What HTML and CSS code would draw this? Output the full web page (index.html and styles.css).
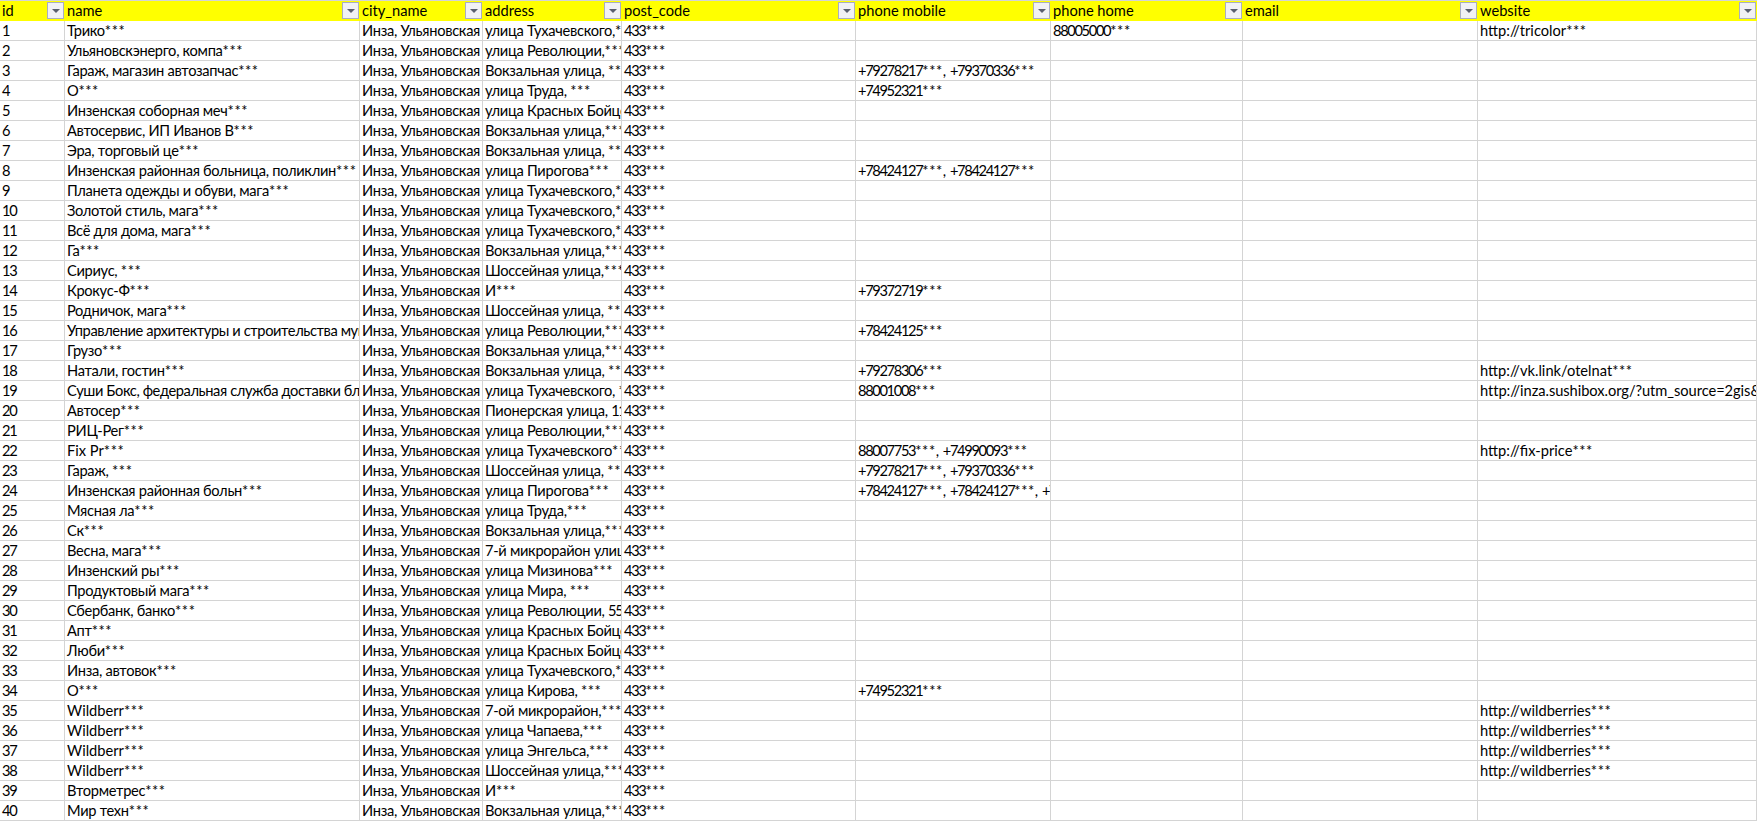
FILE: index.html
```html
<!DOCTYPE html>
<html lang="ru">
<head>
<meta charset="utf-8">
<title>Sheet</title>
<link rel="stylesheet" href="styles.css">
</head>
<body>
<table class="sheet">
<colgroup><col class="c-id"><col class="c-name"><col class="c-city"><col class="c-addr"><col class="c-post"><col class="c-mob"><col class="c-home"><col class="c-mail"><col class="c-web"></colgroup>
<thead><tr>
<th><div class="head"><span class="label">id</span><span class="filter"></span></div></th>
<th><div class="head"><span class="label">name</span><span class="filter"></span></div></th>
<th><div class="head"><span class="label">city_name</span><span class="filter"></span></div></th>
<th><div class="head"><span class="label">address</span><span class="filter"></span></div></th>
<th><div class="head"><span class="label">post_code</span><span class="filter"></span></div></th>
<th><div class="head"><span class="label">phone mobile</span><span class="filter"></span></div></th>
<th><div class="head"><span class="label">phone home</span><span class="filter"></span></div></th>
<th><div class="head"><span class="label">email</span><span class="filter"></span></div></th>
<th><div class="head"><span class="label">website</span><span class="filter"></span></div></th>
</tr></thead>
<tbody>
<tr><td class="num">1</td><td>Трико<span class="m">***</span></td><td>Инза, Ульяновская</td><td>улица Тухачевского,<span class="m">***</span></td><td class="num">433<span class="m">***</span></td><td></td><td class="num">88005000<span class="m">***</span></td><td></td><td class="lat">http://tricolor<span class="m">***</span></td></tr>
<tr><td class="num">2</td><td>Ульяновскэнерго, компа<span class="m">***</span></td><td>Инза, Ульяновская</td><td>улица Революции,<span class="m">***</span></td><td class="num">433<span class="m">***</span></td><td></td><td></td><td></td><td></td></tr>
<tr><td class="num">3</td><td>Гараж, магазин автозапчас<span class="m">***</span></td><td>Инза, Ульяновская</td><td>Вокзальная улица, <span class="m">***</span></td><td class="num">433<span class="m">***</span></td><td class="num">+79278217<span class="m">***</span><span class="sep">, </span>+79370336<span class="m">***</span></td><td></td><td></td><td></td></tr>
<tr><td class="num">4</td><td>О<span class="m">***</span></td><td>Инза, Ульяновская</td><td>улица Труда, <span class="m">***</span></td><td class="num">433<span class="m">***</span></td><td class="num">+74952321<span class="m">***</span></td><td></td><td></td><td></td></tr>
<tr><td class="num">5</td><td>Инзенская соборная меч<span class="m">***</span></td><td>Инза, Ульяновская</td><td>улица Красных Бойцов<span class="m">***</span></td><td class="num">433<span class="m">***</span></td><td></td><td></td><td></td><td></td></tr>
<tr><td class="num">6</td><td>Автосервис, ИП Иванов В<span class="m">***</span></td><td>Инза, Ульяновская</td><td>Вокзальная улица,<span class="m">***</span></td><td class="num">433<span class="m">***</span></td><td></td><td></td><td></td><td></td></tr>
<tr><td class="num">7</td><td>Эра, торговый це<span class="m">***</span></td><td>Инза, Ульяновская</td><td>Вокзальная улица, <span class="m">***</span></td><td class="num">433<span class="m">***</span></td><td></td><td></td><td></td><td></td></tr>
<tr><td class="num">8</td><td>Инзенская районная больница, поликлин<span class="m">***</span></td><td>Инза, Ульяновская</td><td>улица Пирогова<span class="m">***</span></td><td class="num">433<span class="m">***</span></td><td class="num">+78424127<span class="m">***</span><span class="sep">, </span>+78424127<span class="m">***</span></td><td></td><td></td><td></td></tr>
<tr><td class="num">9</td><td>Планета одежды и обуви, мага<span class="m">***</span></td><td>Инза, Ульяновская</td><td>улица Тухачевского,<span class="m">***</span></td><td class="num">433<span class="m">***</span></td><td></td><td></td><td></td><td></td></tr>
<tr><td class="num">10</td><td>Золотой стиль, мага<span class="m">***</span></td><td>Инза, Ульяновская</td><td>улица Тухачевского,<span class="m">***</span></td><td class="num">433<span class="m">***</span></td><td></td><td></td><td></td><td></td></tr>
<tr><td class="num">11</td><td>Всё для дома, мага<span class="m">***</span></td><td>Инза, Ульяновская</td><td>улица Тухачевского,<span class="m">***</span></td><td class="num">433<span class="m">***</span></td><td></td><td></td><td></td><td></td></tr>
<tr><td class="num">12</td><td>Га<span class="m">***</span></td><td>Инза, Ульяновская</td><td>Вокзальная улица,<span class="m">***</span></td><td class="num">433<span class="m">***</span></td><td></td><td></td><td></td><td></td></tr>
<tr><td class="num">13</td><td>Сириус, <span class="m">***</span></td><td>Инза, Ульяновская</td><td>Шоссейная улица,<span class="m">***</span></td><td class="num">433<span class="m">***</span></td><td></td><td></td><td></td><td></td></tr>
<tr><td class="num">14</td><td>Крокус-Ф<span class="m">***</span></td><td>Инза, Ульяновская</td><td>И<span class="m">***</span></td><td class="num">433<span class="m">***</span></td><td class="num">+79372719<span class="m">***</span></td><td></td><td></td><td></td></tr>
<tr><td class="num">15</td><td>Родничок, мага<span class="m">***</span></td><td>Инза, Ульяновская</td><td>Шоссейная улица, <span class="m">***</span></td><td class="num">433<span class="m">***</span></td><td></td><td></td><td></td><td></td></tr>
<tr><td class="num">16</td><td class="tight">Управление архитектуры и строительства муниципального<span class="m">***</span></td><td>Инза, Ульяновская</td><td>улица Революции,<span class="m">***</span></td><td class="num">433<span class="m">***</span></td><td class="num">+78424125<span class="m">***</span></td><td></td><td></td><td></td></tr>
<tr><td class="num">17</td><td>Грузо<span class="m">***</span></td><td>Инза, Ульяновская</td><td>Вокзальная улица,<span class="m">***</span></td><td class="num">433<span class="m">***</span></td><td></td><td></td><td></td><td></td></tr>
<tr><td class="num">18</td><td>Натали, гостин<span class="m">***</span></td><td>Инза, Ульяновская</td><td>Вокзальная улица, <span class="m">***</span></td><td class="num">433<span class="m">***</span></td><td class="num">+79278306<span class="m">***</span></td><td></td><td></td><td class="lat">http://vk.link/otelnat<span class="m">***</span></td></tr>
<tr><td class="num">19</td><td class="tight">Суши Бокс, федеральная служба доставки блюд<span class="m">***</span></td><td>Инза, Ульяновская</td><td>улица Тухачевского, <span class="m">***</span></td><td class="num">433<span class="m">***</span></td><td class="num">88001008<span class="m">***</span></td><td></td><td></td><td class="lat tight-url">http://inza.sushibox.org/?utm_source=2gis&amp;<span class="m">***</span></td></tr>
<tr><td class="num">20</td><td>Автосер<span class="m">***</span></td><td>Инза, Ульяновская</td><td>Пионерская улица, <span class="d">11</span><span class="m">***</span></td><td class="num">433<span class="m">***</span></td><td></td><td></td><td></td><td></td></tr>
<tr><td class="num">21</td><td>РИЦ-Рег<span class="m">***</span></td><td>Инза, Ульяновская</td><td>улица Революции,<span class="m">***</span></td><td class="num">433<span class="m">***</span></td><td></td><td></td><td></td><td></td></tr>
<tr><td class="num">22</td><td class="lat">Fix Pr<span class="m">***</span></td><td>Инза, Ульяновская</td><td>улица Тухачевского<span class="m">***</span></td><td class="num">433<span class="m">***</span></td><td class="num">88007753<span class="m">***</span><span class="sep">, </span>+74990093<span class="m">***</span></td><td></td><td></td><td class="lat">http://fix-price<span class="m">***</span></td></tr>
<tr><td class="num">23</td><td>Гараж, <span class="m">***</span></td><td>Инза, Ульяновская</td><td>Шоссейная улица, <span class="m">***</span></td><td class="num">433<span class="m">***</span></td><td class="num">+79278217<span class="m">***</span><span class="sep">, </span>+79370336<span class="m">***</span></td><td></td><td></td><td></td></tr>
<tr><td class="num">24</td><td>Инзенская районная больн<span class="m">***</span></td><td>Инза, Ульяновская</td><td>улица Пирогова<span class="m">***</span></td><td class="num">433<span class="m">***</span></td><td class="num">+78424127<span class="m">***</span><span class="sep">, </span>+78424127<span class="m">***</span><span class="sep">, </span>+78424127<span class="m">***</span></td><td></td><td></td><td></td></tr>
<tr><td class="num">25</td><td>Мясная ла<span class="m">***</span></td><td>Инза, Ульяновская</td><td>улица Труда,<span class="m">***</span></td><td class="num">433<span class="m">***</span></td><td></td><td></td><td></td><td></td></tr>
<tr><td class="num">26</td><td>Ск<span class="m">***</span></td><td>Инза, Ульяновская</td><td>Вокзальная улица,<span class="m">***</span></td><td class="num">433<span class="m">***</span></td><td></td><td></td><td></td><td></td></tr>
<tr><td class="num">27</td><td>Весна, мага<span class="m">***</span></td><td>Инза, Ульяновская</td><td>7-й микрорайон улица<span class="m">***</span></td><td class="num">433<span class="m">***</span></td><td></td><td></td><td></td><td></td></tr>
<tr><td class="num">28</td><td>Инзенский ры<span class="m">***</span></td><td>Инза, Ульяновская</td><td>улица Мизинова<span class="m">***</span></td><td class="num">433<span class="m">***</span></td><td></td><td></td><td></td><td></td></tr>
<tr><td class="num">29</td><td>Продуктовый мага<span class="m">***</span></td><td>Инза, Ульяновская</td><td>улица Мира, <span class="m">***</span></td><td class="num">433<span class="m">***</span></td><td></td><td></td><td></td><td></td></tr>
<tr><td class="num">30</td><td>Сбербанк, банко<span class="m">***</span></td><td>Инза, Ульяновская</td><td>улица Революции, <span class="d">55</span><span class="m">***</span></td><td class="num">433<span class="m">***</span></td><td></td><td></td><td></td><td></td></tr>
<tr><td class="num">31</td><td>Апт<span class="m">***</span></td><td>Инза, Ульяновская</td><td>улица Красных Бойцов<span class="m">***</span></td><td class="num">433<span class="m">***</span></td><td></td><td></td><td></td><td></td></tr>
<tr><td class="num">32</td><td>Люби<span class="m">***</span></td><td>Инза, Ульяновская</td><td>улица Красных Бойцов<span class="m">***</span></td><td class="num">433<span class="m">***</span></td><td></td><td></td><td></td><td></td></tr>
<tr><td class="num">33</td><td>Инза, автовок<span class="m">***</span></td><td>Инза, Ульяновская</td><td>улица Тухачевского,<span class="m">***</span></td><td class="num">433<span class="m">***</span></td><td></td><td></td><td></td><td></td></tr>
<tr><td class="num">34</td><td>О<span class="m">***</span></td><td>Инза, Ульяновская</td><td>улица Кирова, <span class="m">***</span></td><td class="num">433<span class="m">***</span></td><td class="num">+74952321<span class="m">***</span></td><td></td><td></td><td></td></tr>
<tr><td class="num">35</td><td class="lat">Wildberr<span class="m">***</span></td><td>Инза, Ульяновская</td><td>7-ой микрорайон,<span class="m">***</span></td><td class="num">433<span class="m">***</span></td><td></td><td></td><td></td><td class="lat">http://wildberries<span class="m">***</span></td></tr>
<tr><td class="num">36</td><td class="lat">Wildberr<span class="m">***</span></td><td>Инза, Ульяновская</td><td>улица Чапаева,<span class="m">***</span></td><td class="num">433<span class="m">***</span></td><td></td><td></td><td></td><td class="lat">http://wildberries<span class="m">***</span></td></tr>
<tr><td class="num">37</td><td class="lat">Wildberr<span class="m">***</span></td><td>Инза, Ульяновская</td><td>улица Энгельса,<span class="m">***</span></td><td class="num">433<span class="m">***</span></td><td></td><td></td><td></td><td class="lat">http://wildberries<span class="m">***</span></td></tr>
<tr><td class="num">38</td><td class="lat">Wildberr<span class="m">***</span></td><td>Инза, Ульяновская</td><td>Шоссейная улица,<span class="m">***</span></td><td class="num">433<span class="m">***</span></td><td></td><td></td><td></td><td class="lat">http://wildberries<span class="m">***</span></td></tr>
<tr><td class="num">39</td><td>Вторметрес<span class="m">***</span></td><td>Инза, Ульяновская</td><td>И<span class="m">***</span></td><td class="num">433<span class="m">***</span></td><td></td><td></td><td></td><td></td></tr>
<tr><td class="num">40</td><td>Мир техн<span class="m">***</span></td><td>Инза, Ульяновская</td><td>Вокзальная улица,<span class="m">***</span></td><td class="num">433<span class="m">***</span></td><td></td><td></td><td></td><td></td></tr>
</tbody>
</table>
</body>
</html>
```

FILE: styles.css
```css
html, body { margin: 0; padding: 0; background: #fff; overflow: hidden; }
.sheet {
  table-layout: fixed;
  width: 1757px;
  border-collapse: separate;
  border-spacing: 0;
  font-family: "Lato", "Noto Sans", sans-serif;
  font-size: 14.67px;
  color: #000;
}
.c-id { width: 65px; }
.c-name { width: 295px; }
.c-city { width: 123px; }
.c-addr { width: 139px; }
.c-post { width: 234px; }
.c-mob { width: 195px; }
.c-home { width: 192px; }
.c-mail { width: 235px; }
.c-web { width: 279px; }
th {
  height: 20px;
  padding: 0;
  background: #ffff00;
  border-top: 1px solid #d4d4d4;
  font-weight: 400;
  text-align: left;
}
.head {
  display: flex;
  justify-content: space-between;
  align-items: flex-start;
  height: 20px;
  padding: 1px 1px 0 2px;
  box-sizing: border-box;
}
.label { line-height: 20px; margin-top: -1px; white-space: nowrap; }
.filter {
  display: flex;
  align-items: center;
  justify-content: center;
  flex: none;
  width: 17px;
  height: 17px;
  box-sizing: border-box;
  border: 1px solid #a9aec0;
  background: #f1f1f4;
}
.filter::after {
  content: "";
  width: 0;
  height: 0;
  margin-top: 1px;
  border-left: 4px solid transparent;
  border-right: 4px solid transparent;
  border-top: 4px solid #5a5f6e;
}
td {
  height: 19px;
  padding: 0 0 0 2px;
  border-right: 1px solid #d4d4d4;
  border-bottom: 1px solid #d4d4d4;
  line-height: 19px;
  white-space: nowrap;
  overflow: hidden;
  letter-spacing: -0.3px;
}
td.num { letter-spacing: -1.35px; }
td.lat { letter-spacing: 0; }
td.tight { letter-spacing: -0.4px; }
td.tight-url { letter-spacing: -0.05px; }
.d { letter-spacing: -1.35px; }
.m { letter-spacing: 0.6px; }
.sep { letter-spacing: 0; }
```
